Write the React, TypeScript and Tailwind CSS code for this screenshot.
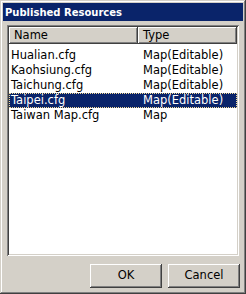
const rows = [
  { name: "Hualian.cfg", type: "Map(Editable)" },
  { name: "Kaohsiung.cfg", type: "Map(Editable)" },
  { name: "Taichung.cfg", type: "Map(Editable)" },
  { name: "Taipei.cfg", type: "Map(Editable)", selected: true },
  { name: "Taiwan Map.cfg", type: "Map" },
];

const App = () => {
  return (
    <div
      className="w-[246px] h-[294px] bg-[#d4d0c8] p-[3px] flex flex-col text-[11.5px] text-black shadow-[inset_-1px_-1px_#404040,inset_1px_1px_#d4d0c8,inset_-2px_-2px_#808080,inset_2px_2px_#ffffff]"
      style={{ fontFamily: '"DejaVu Sans", Verdana, sans-serif' }}
    >
      {/* Title bar */}
      <div className="h-[18px] bg-[#0a246a] text-white font-bold text-[10px] flex items-center px-[2px]">
        Published Resources
      </div>

      {/* List view */}
      <div className="mt-[4px] mx-[4px] h-[231px] bg-white p-[2px] shadow-[inset_1px_1px_#808080,inset_-1px_-1px_#ffffff,inset_2px_2px_#404040,inset_-2px_-2px_#d4d0c8]">
        <div className="flex h-[17px]">
          <div className="w-[129px] pl-[5px] flex items-center bg-[#d4d0c8] shadow-[inset_-1px_-1px_#404040,inset_1px_1px_#ffffff,inset_-2px_-2px_#808080]">
            Name
          </div>
          <div className="flex-1 pl-[5px] flex items-center bg-[#d4d0c8] shadow-[inset_-1px_-1px_#404040,inset_1px_1px_#ffffff,inset_-2px_-2px_#808080]">
            Type
          </div>
        </div>
        <div className="mt-[4px] flex flex-col">
          {rows.map((r) => (
            <div
              key={r.name}
              className={
                r.selected
                  ? "flex h-[15px] items-center bg-[#0a246a] text-white border border-dotted border-[#f5db95]"
                  : "flex h-[15px] items-center border border-transparent"
              }
            >
              <div className="w-[128px] pl-[1px]">{r.name}</div>
              <div className="flex-1 pl-[5px]">{r.type}</div>
            </div>
          ))}
        </div>
      </div>

      {/* Buttons */}
      <div className="mt-[8px] flex justify-end gap-[6px] pr-[3px]">
        <button className="w-[72px] h-[24px] bg-[#d4d0c8] shadow-[inset_-1px_-1px_#404040,inset_1px_1px_#ffffff,inset_-2px_-2px_#808080]">
          OK
        </button>
        <button className="w-[72px] h-[24px] bg-[#d4d0c8] shadow-[inset_-1px_-1px_#404040,inset_1px_1px_#ffffff,inset_-2px_-2px_#808080]">
          Cancel
        </button>
      </div>
    </div>
  );
};

export default App;
